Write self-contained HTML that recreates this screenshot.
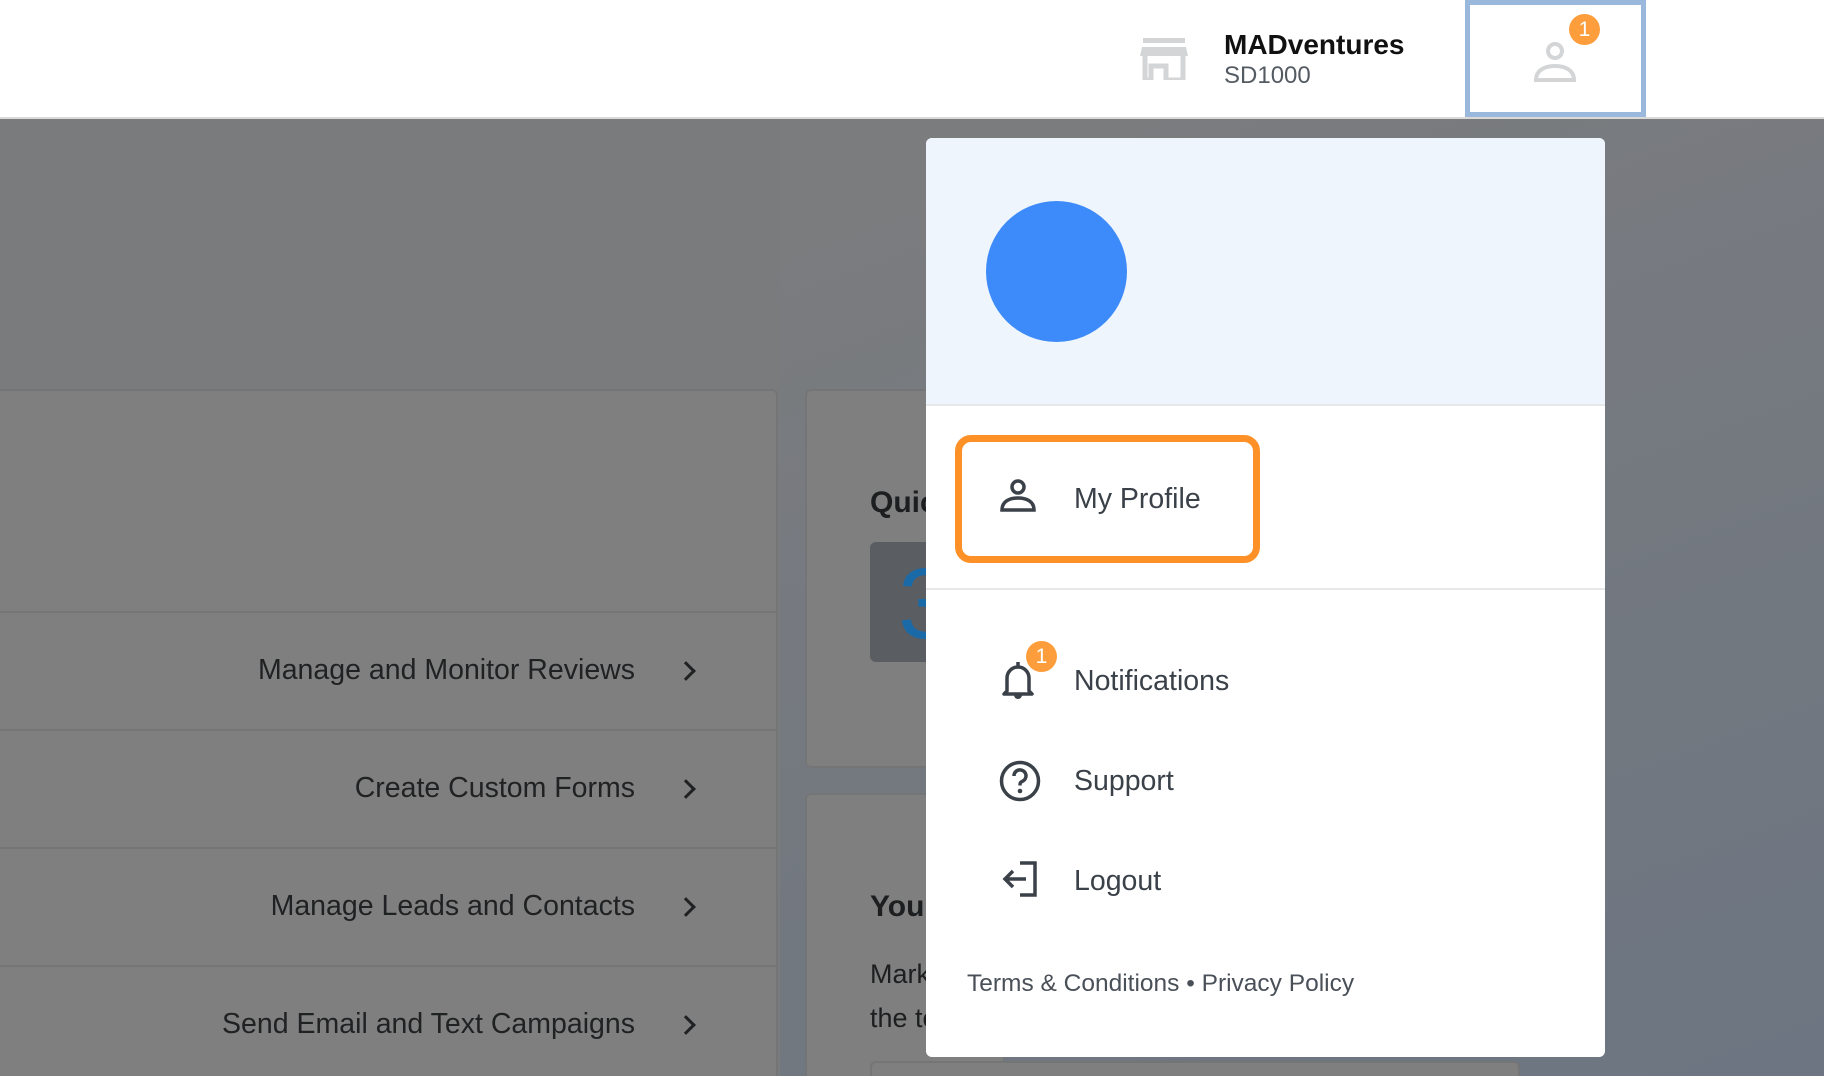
<!DOCTYPE html>
<html><head><meta charset="utf-8"><style>
*{margin:0;padding:0;box-sizing:border-box}
html{width:1824px;height:1076px;overflow:hidden}
body{width:1824px;height:1076px;overflow:hidden;position:relative;font-family:"Liberation Sans",sans-serif;background:#7a7b7c}
.hdr{position:absolute;left:0;top:0;width:1824px;height:119px;background:#fff;border-bottom:2px solid #d9d9d9}
.bg2{position:absolute;left:780px;top:121px;width:1044px;height:955px;background:linear-gradient(160deg,#7b7c7d 0%,#767a80 40%,#6c7581 100%)}
.card{position:absolute;background:#7f7f7f;border:2px solid #747576;border-radius:6px}
.row{position:absolute;left:0;width:778px;border-top:2px solid #747576;height:118px}
.row span{position:absolute;right:141px;top:41px;font-size:28.5px;color:#1f2123}
.row i{position:absolute;left:681px;top:51px;width:14px;height:14px;border-right:3px solid #1f2123;border-top:3px solid #1f2123;transform:rotate(45deg)}
.dd{position:absolute;left:926px;top:138px;width:679px;height:919px;background:#fff;border-radius:6px;overflow:hidden}
.ddh{height:268px;background:#eff5fd;border-bottom:2px solid #e6e8ea}
.item{position:absolute;left:148px;font-size:28.5px;color:#3b4149}
.ico{position:absolute;left:74px}
</style></head><body>
<div class="hdr">
 <svg style="position:absolute;left:1140px;top:38px" width="48" height="42" viewBox="0 0 48 42"><rect x="3" y="0" width="42" height="5" fill="#d4d5d6"/><path d="M2 9h44l2 9H0z" fill="#d4d5d6"/><path d="M5 18v24h6V28h15v14h17V18" fill="none" stroke="#d4d5d6" stroke-width="5"/></svg>
 <div style="position:absolute;left:1224px;top:29px;font-size:28px;font-weight:bold;color:#111">MADventures</div>
 <div style="position:absolute;left:1224px;top:62px;font-size:24px;color:#555b62">SD1000</div>
 <div style="position:absolute;left:1465px;top:0;width:181px;height:117px;border:5px solid #9ab8dc;background:#fff"></div>
 <svg style="position:absolute;left:1534px;top:40px" width="44" height="42" viewBox="0 0 44 42"><circle cx="21" cy="11" r="7" fill="none" stroke="#d4d5d6" stroke-width="4"/><path d="M2 40c0-10 9-14 19-14s19 4 19 14z" fill="none" stroke="#d4d5d6" stroke-width="4"/></svg>
 <div style="position:absolute;left:1569px;top:14px;width:31px;height:31px;border-radius:50%;background:#fd9d3b;color:#fff;font-size:21px;text-align:center;line-height:31px">1</div>
</div>
<div class="bg2"></div>
<div class="card" style="left:-4px;top:389px;width:782px;height:687px;border-bottom:none;border-radius:6px 6px 0 0;overflow:hidden">
 <div class="row" style="top:220px"><span>Manage and Monitor Reviews</span><i></i></div>
 <div class="row" style="top:338px"><span>Create Custom Forms</span><i></i></div>
 <div class="row" style="top:456px"><span>Manage Leads and Contacts</span><i></i></div>
 <div class="row" style="top:574px"><span>Send Email and Text Campaigns</span><i></i></div>
</div>
<div class="card" style="left:805px;top:389px;width:200px;height:379px">
 <div style="position:absolute;left:63px;top:95px;font-size:30px;font-weight:bold;color:#1c1e20">Quick</div>
 <div style="position:absolute;left:63px;top:151px;width:120px;height:120px;background:#5a5d61;border-radius:6px;overflow:hidden"><div style="position:absolute;left:28px;top:5px;font-size:100px;color:#1b6aa8">3</div></div>
</div>
<div class="card" style="left:805px;top:793px;width:200px;height:283px;border-bottom:none;border-radius:6px 6px 0 0">
 <div style="position:absolute;left:63px;top:95px;font-size:30px;font-weight:bold;color:#1c1e20">Your</div>
 <div style="position:absolute;left:63px;top:157px;font-size:27px;color:#1c1e20;line-height:44px">Marketing<br>the tools</div>
</div>
<div class="card" style="left:870px;top:1061px;width:650px;height:15px;border-bottom:none;border-radius:6px 6px 0 0"></div>
<div class="dd">
 <div class="ddh"><div style="position:absolute;left:60px;top:63px;width:141px;height:141px;border-radius:50%;background:#3d8bfa"></div></div>
 <div style="position:absolute;left:29px;top:297px;width:305px;height:128px;border:7px solid #fd9128;border-radius:16px"></div>
 <svg class="ico" style="top:341px" width="36" height="34" viewBox="0 0 36 34"><circle cx="18" cy="8" r="6" fill="none" stroke="#3b4149" stroke-width="3.5"/><path d="M2 31c0-9 8-12 16-12s16 3 16 12z" fill="none" stroke="#3b4149" stroke-width="3.5"/></svg>
 <div class="item" style="top:345px">My Profile</div>
 <div style="position:absolute;left:0;top:450px;width:679px;height:2px;background:#e6e8ea"></div>
 <svg class="ico" style="top:521px" width="36" height="40" viewBox="0 0 36 40"><path d="M18 3v4M7 32V19a11 11 0 0 1 22 0v13l3 3H4z" fill="none" stroke="#3b4149" stroke-width="3.5" stroke-linejoin="round"/><path d="M14 36a4 4 0 0 0 8 0" fill="#3b4149"/></svg>
 <div style="position:absolute;left:100px;top:503px;width:31px;height:31px;border-radius:50%;background:#fd9d3b;color:#fff;font-size:21px;text-align:center;line-height:31px">1</div>
 <div class="item" style="top:527px">Notifications</div>
 <svg class="ico" style="top:622px;left:73px" width="42" height="42" viewBox="0 0 42 42"><circle cx="21" cy="21" r="18.5" fill="none" stroke="#3b4149" stroke-width="3.5"/><path d="M15 16a6 6 0 1 1 8 5.5c-2 1-2 2-2 4" fill="none" stroke="#3b4149" stroke-width="3.5"/><circle cx="21" cy="31" r="2.3" fill="#3b4149"/></svg>
 <div class="item" style="top:627px">Support</div>
 <svg class="ico" style="top:722px;left:76px" width="38" height="38" viewBox="0 0 38 38"><path d="M18 3h15v32H18" fill="none" stroke="#3b4149" stroke-width="3.5"/><path d="M24 19H4M11 11l-8 8 8 8" fill="none" stroke="#3b4149" stroke-width="3.5"/></svg>
 <div class="item" style="top:727px">Logout</div>
 <div style="position:absolute;left:41px;top:832px;font-size:24.5px;color:#4a5058">Terms &amp; Conditions • Privacy Policy</div>
</div>
</body></html>
